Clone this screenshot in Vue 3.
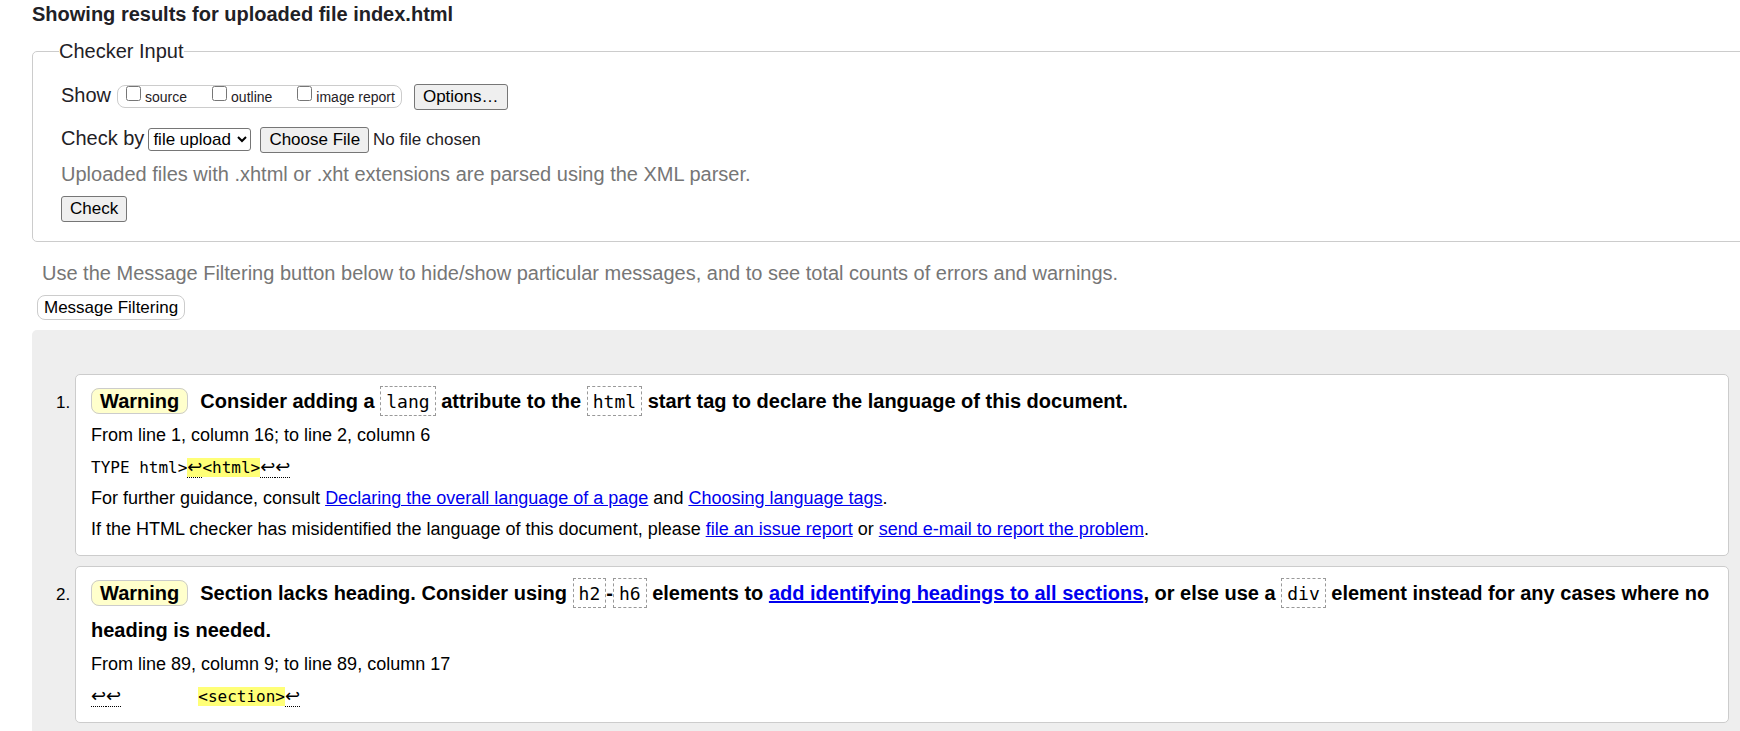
<script setup>
import { ref } from 'vue'

const shown = ref([])
const views = [
  { id: 'source', label: 'source' },
  { id: 'outline', label: 'outline' },
  { id: 'imagereport', label: 'image report' }
]
const method = ref('file upload')
</script>

<template>
  <main class="page">
    <h2 class="title">Showing results for uploaded file index.html</h2>

    <form @submit.prevent>
      <fieldset class="checker">
        <legend>Checker Input</legend>
        <div class="row">
          <span class="caption">Show</span>
          <span class="views">
            <label v-for="v in views" :key="v.id" :for="v.id">
              <input :id="v.id" v-model="shown" type="checkbox" :value="v.id">
              {{ v.label }}
            </label>
          </span>
          <button type="button" class="options">Options…</button>
        </div>
        <div class="row second">
          <label class="caption" for="method">Check by</label>
          <select id="method" v-model="method">
            <option>file upload</option>
            <option>address</option>
            <option>text input</option>
          </select>
          <input type="file" aria-label="File to check">
        </div>
        <p class="hint">Uploaded files with .xhtml or .xht extensions are parsed using the XML parser.</p>
        <button type="submit">Check</button>
      </fieldset>
    </form>

    <p class="filter-hint">Use the Message Filtering button below to hide/show particular messages, and to see total counts of errors and warnings.</p>
    <button type="button" class="filter">Message Filtering</button>

    <section class="results">
      <ol>
        <li>
          <p class="headline"><strong class="badge">Warning</strong><span>Consider adding a <code>lang</code> attribute to the <code>html</code> start tag to declare the language of this document.</span></p>
          <p>From line 1, column 16; to line 2, column 6</p>
          <p class="extract">TYPE html&gt;<mark><span class="lf">↩</span>&lt;html&gt;</mark><span class="lf">↩</span><span class="lf">↩</span></p>
          <p>For further guidance, consult <a href="#declaring">Declaring the overall language of a page</a> and <a href="#tags">Choosing language tags</a>.</p>
          <p>If the HTML checker has misidentified the language of this document, please <a href="#issue">file an issue report</a> or <a href="#mail">send e-mail to report the problem</a>.</p>
        </li>
        <li>
          <p class="headline"><strong class="badge">Warning</strong><span>Section lacks heading. Consider using <code>h2</code>-<code>h6</code> elements to <a href="#headings">add identifying headings to all sections</a>, or else use a <code>div</code> element instead for any cases where no heading is needed.</span></p>
          <p>From line 89, column 9; to line 89, column 17</p>
          <p class="extract"><span class="lf">↩</span><span class="lf">↩</span>{{ '        ' }}<mark>&lt;section&gt;</mark><span class="lf">↩</span></p>
        </li>
      </ol>
    </section>
  </main>
</template>

<style>
body {
  margin: 0;
  background: #fff;
}
</style>

<style scoped>
.page {
  padding-left: 32px;
  color: #1f2126;
  font: 20px/24px Arial, "Liberation Sans", sans-serif;
  overflow: hidden;
}
.title {
  margin: 2px 0 12px;
  font-size: 20px;
  line-height: 24px;
}
.checker {
  margin: 0 -20px 0 0;
  padding: 20px 28px 19px;
  border: 1px solid #ccc;
  border-radius: 5px;
}
legend {
  margin-left: -2px;
  padding: 0;
  line-height: 26px;
}
.row {
  display: flex;
  align-items: flex-start;
  height: 26px;
}
.second {
  margin-top: 17px;
}
.caption {
  line-height: 22px;
}
.views {
  display: flex;
  gap: 25px;
  margin: 1px 12px 0 6px;
  padding: 0 6px 0 8px;
  height: 21px;
  border: 1px solid #ccc;
  border-radius: 8px;
  font-size: 14px;
  line-height: 22px;
}
.views label {
  display: flex;
  gap: 4px;
}
.views input {
  width: 15px;
  height: 15px;
  margin: 0;
}
button,
select,
input[type="file"],
input::file-selector-button {
  font: 17px/20px Arial, "Liberation Sans", sans-serif;
}
button,
input::file-selector-button {
  height: 26px;
  padding: 0 8px;
  border: 1px solid #767676;
  border-radius: 3px;
  background: #efefef;
  color: #000;
}
select {
  height: 23px;
  width: 103px;
  margin: 1px 9px 0 4px;
  padding: 0;
  border: 1px solid #767676;
  border-radius: 3px;
  background: #fff;
  color: #000;
}
.hint,
.filter-hint {
  margin: 9px 0;
  color: #767676;
}
.filter-hint {
  margin: 19px 10px 10px;
}
.filter {
  display: block;
  height: 25px;
  margin: 0 5px 10px;
  padding: 0 6px;
  border-color: #ccc;
  border-radius: 8px;
  background: #fff;
}
.results {
  padding: 44px 11px 9px 43px;
  border-radius: 5px 0 0 5px;
  background: #eee;
  color: #000;
  font-size: 18px;
}
ol {
  margin: 0;
  padding: 0;
}
li {
  margin-bottom: 10px;
  padding: 8px 15px 10px;
  border: 1px solid #ccc;
  border-radius: 5px;
  background: #fff;
}
li::marker {
  font-size: 17px;
}
li p {
  margin: 0;
  line-height: 31px;
}
li .headline {
  font-size: 20px;
  line-height: 37px;
  font-weight: bold;
}
.badge {
  margin-right: 12px;
  padding: 1px 8px;
  border: 1px solid #ccc;
  border-radius: 8px;
  background: #ffc;
}
code {
  padding: 4px 5px 3px;
  border: 1px dashed #999;
  font: 18px "DejaVu Sans Mono", monospace;
}
li .extract {
  font-family: "DejaVu Sans Mono", monospace;
  font-size: 16px;
  white-space: pre;
}
mark {
  background: #ff7;
  color: #000;
}
.lf {
  border-bottom: 1px dotted #000;
  font-family: "DejaVu Sans", sans-serif;
  font-size: 18px;
}
a {
  color: #00e;
}
</style>
